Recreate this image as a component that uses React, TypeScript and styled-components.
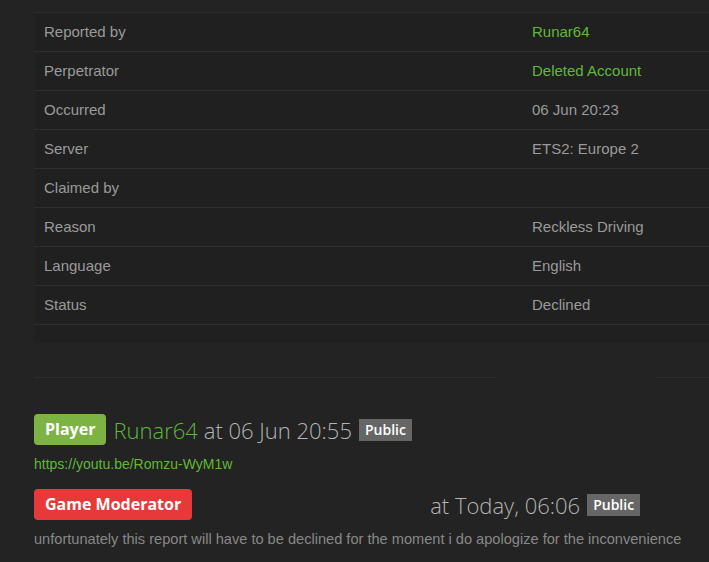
import styled, { createGlobalStyle } from 'styled-components';

const GlobalStyle = createGlobalStyle`
  html, body {
    margin: 0;
    padding: 0;
    background: #232323;
    overflow: hidden;
  }
  body {
    font-family: 'Liberation Sans', Arial, sans-serif;
  }
`;

const details = [
  { label: 'Reported by', value: 'Runar64', link: true },
  { label: 'Perpetrator', value: 'Deleted Account', link: true },
  { label: 'Occurred', value: '06 Jun 20:23' },
  { label: 'Server', value: 'ETS2: Europe 2' },
  { label: 'Claimed by', value: '' },
  { label: 'Reason', value: 'Reckless Driving' },
  { label: 'Language', value: 'English' },
  { label: 'Status', value: 'Declined' },
];

export default function App() {
  return (
    <Page>
      <GlobalStyle />
      <DetailsTable>
        {details.map((d) => (
          <Row key={d.label}>
            <Label>{d.label}</Label>
            <Value $link={d.link}>{d.value}</Value>
          </Row>
        ))}
      </DetailsTable>

      <Divider>
        <DividerPart $width={463} />
        <DividerPart $width={60} $offset={160} />
      </Divider>

      <Comments>
        <Comment>
          <CommentHead>
            <Badge $color='#7cb342'>Player</Badge>
            <Name>Runar64</Name>
            <When>at 06 Jun 20:55</When>
            <Visibility>Public</Visibility>
          </CommentHead>
          <Body $link>https://youtu.be/Romzu-WyM1w</Body>
        </Comment>
        <Comment>
          <CommentHead>
            <Badge $color='#e8393a'>Game Moderator</Badge>
            <HiddenName />
            <When>at Today, 06:06</When>
            <Visibility>Public</Visibility>
          </CommentHead>
          <Body $wide>
            unfortunately this report will have to be declined for the moment i do apologize for the inconvenience
          </Body>
        </Comment>
      </Comments>
    </Page>
  );
}

const Page = styled.div`
  padding: 12px 0 0 34px;
  width: 675px;
  overflow: hidden;
`;

const DetailsTable = styled.div`
  width: 900px;
  background: #202020;
  padding-bottom: 18px;
  border-top: 1px solid #2c2c2c;
`;

const Row = styled.div`
  display: grid;
  grid-template-columns: 498px 1fr;
  height: 36px;
  padding-bottom: 2px;
  align-items: center;
  border-bottom: 1px solid #2e2e2e;
  font-size: 15px;
`;

const Label = styled.div`
  padding-left: 10px;
  color: #9a9a9a;
`;

const Value = styled.div<{ $link?: boolean }>`
  color: ${(p) => (p.$link ? '#5fb83a' : '#9a9a9a')};
`;

const Divider = styled.div`
  display: flex;
  margin-top: 34px;
  width: 900px;
`;

const DividerPart = styled.div<{ $width: number; $offset?: number }>`
  height: 1px;
  background: #2e2e2e;
  width: ${(p) => p.$width}px;
  margin-left: ${(p) => p.$offset || 0}px;
  flex: ${(p) => (p.$offset ? '1' : 'none')};
`;

const Comments = styled.div`
  padding-top: 36px;
  display: flex;
  flex-direction: column;
  gap: 17px;
`;

const Comment = styled.div`
  display: flex;
  flex-direction: column;
`;

const CommentHead = styled.div`
  display: flex;
  align-items: center;
  height: 31px;
  font-family: 'Open Sans', sans-serif;
`;

const Badge = styled.span<{ $color: string }>`
  background: ${(p) => p.$color};
  color: #fff;
  font-weight: 700;
  font-size: 16px;
  height: 31px;
  line-height: 31px;
  padding: 0 11px;
  border-radius: 4px;
`;

const Name = styled.span`
  margin-left: 7px;
  color: #5fb83a;
  font-weight: 300;
  font-size: 22px;
`;

const HiddenName = styled.span`
  display: inline-block;
  width: 232px;
`;

const When = styled.span`
  margin-left: 6px;
  color: #b4b4b4;
  font-weight: 300;
  font-size: 22px;
`;

const Visibility = styled.span`
  margin-left: 7px;
  background: #666;
  color: #fff;
  font-weight: 600;
  font-size: 14px;
  height: 22px;
  line-height: 22px;
  padding: 0 6px;
`;

const Body = styled.div<{ $link?: boolean; $wide?: boolean }>`
  margin-top: 11px;
  font-size: ${(p) => (p.$wide ? '14.6px' : '14px')};
  color: ${(p) => (p.$link ? '#5fb83a' : '#888')};
  line-height: 16px;
  white-space: nowrap;
`;
